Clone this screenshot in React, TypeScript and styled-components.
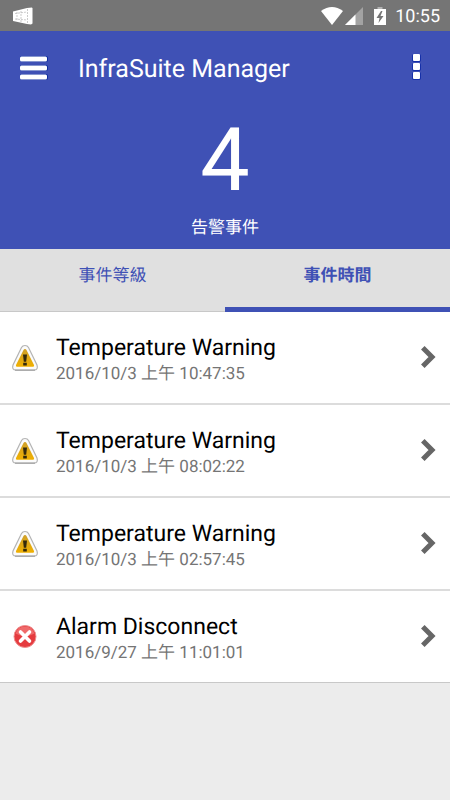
import React, { useState } from 'react';
import styled, { createGlobalStyle } from 'styled-components';

const PRIMARY = '#3f51b5';

const GlobalStyle = createGlobalStyle`
  *, *::before, *::after { box-sizing: border-box; }
  body {
    margin: 0;
    background: #ececec;
    font-family: Roboto, "Noto Sans CJK TC", sans-serif;
    text-rendering: geometricPrecision;
  }
  button { font: inherit; text-rendering: inherit; border: 0; padding: 0; margin: 0; background: none; cursor: pointer; }
  svg { display: block; flex: none; }
`;

const Screen = styled.div`
  min-height: 100vh;
  background: #ececec;
`;

const StatusBar = styled.div`
  display: flex;
  align-items: center;
  height: 31px;
  padding: 0 10px 0 12px;
  background: #757575;
  color: #fff;
`;

const StatusIcons = styled.div`
  display: flex;
  align-items: center;
  margin-left: auto;
`;

const Clock = styled.time`
  margin-left: 9px;
  padding-top: 2px;
  font-size: 18px;
  line-height: 30px;
`;

const Header = styled.header`
  height: 218px;
  background: ${PRIMARY};
  color: #fff;
`;

const Toolbar = styled.div`
  display: flex;
  align-items: center;
  height: 76px;
  padding: 0 28px 0 20px;
`;

const IconButton = styled.button`
  display: flex;
  color: #fff;
`;

const Title = styled.h1`
  flex: 1;
  margin: 0 0 0 30px;
  padding-top: 2px;
  font-size: 25px;
  font-weight: 400;
  line-height: 32px;
`;

const Summary = styled.div`
  display: flex;
  flex-direction: column;
  align-items: center;
`;

const Count = styled.div`
  font-size: 88px;
  line-height: 108px;
`;

const Caption = styled.div`
  font-size: 17px;
  line-height: 26px;
`;

const Tabs = styled.div`
  display: grid;
  grid-template-columns: 1fr 1fr;
  height: 63px;
  background: #e0e0e0;
`;

const Tab = styled.button<{ $active: boolean }>`
  border-bottom: ${({ $active }) => ($active ? `5px solid ${PRIMARY}` : '1px solid #c8c8c8')};
  padding-bottom: ${({ $active }) => ($active ? '10px' : '14px')};
  color: ${PRIMARY};
  font-size: 17px;
  font-weight: ${({ $active }) => ($active ? 700 : 400)};
`;

const List = styled.ul`
  margin: 0;
  padding: 0;
  list-style: none;
`;

const Row = styled.button`
  display: flex;
  align-items: center;
  width: 100%;
  height: 93px;
  padding: 0 14px 0 11px;
  border-bottom: 2px solid #dcdcdc;
  background: #fff;
  text-align: left;

  li:last-child > & {
    height: 92px;
    border-bottom: 1px solid #c8c8c8;
  }
`;

const RowText = styled.span`
  flex: 1;
  display: flex;
  flex-direction: column;
  margin-left: 17px;
  padding-top: 6px;
`;

const RowTitle = styled.span`
  color: #000;
  font-size: 23px;
  line-height: 27px;
`;

const RowDate = styled.span`
  color: #757575;
  font-size: 17px;
  line-height: 27px;
`;

const AppGlyph = () => (
  <svg width="22" height="18" viewBox="0 0 22 18" aria-hidden="true">
    <path d="M1 4.500 15 1 20 .5 20.500 1.500V16.500L19 17.500 15 17 1 14z" fill="#fff" />
    <path d="M5 5v9M9 4v11M15.500 2v14M3 6.500 15 5M3 12l12 1" stroke="#b5b5b5" strokeWidth=".7" strokeDasharray="2 1" fill="none" />
  </svg>
);

const WifiGlyph = () => (
  <svg width="22" height="18" viewBox="0 0 22 18" aria-hidden="true">
    <path d="M0 4Q11-4 22 4L11 18z" fill="#fff" />
  </svg>
);

const SignalSvg = styled.svg`
  margin-left: 2px;
`;

const SignalGlyph = () => (
  <SignalSvg width="18" height="18" viewBox="0 0 18 18" aria-hidden="true">
    <path d="M18 0V18H0z" fill="#a3a3a3" />
    <path d="M10.500 7.500V18H0z" fill="#fff" />
  </SignalSvg>
);

const BatterySvg = styled.svg`
  margin-left: 11px;
`;

const BatteryGlyph = () => (
  <BatterySvg width="12" height="18" viewBox="0 0 12 18" aria-hidden="true">
    <path d="M3.500 0h5v2H3.500z" fill="#b4b4b4" />
    <path d="M0 2h12v16H0z" fill="#fff" />
    <path d="M7 4 2.500 11H5.500L4.500 16 9.500 9H6.500L8.500 4z" fill="#757575" />
  </BatterySvg>
);

const MenuGlyph = () => (
  <svg width="28" height="26" viewBox="0 0 28 26" aria-hidden="true">
    <g fill="#0d2c9e">
      <rect x="0" y="0" width="28" height="6" rx="2" />
      <rect x="0" y="9" width="28" height="6" rx="2" />
      <rect x="0" y="18" width="28" height="6" rx="2" />
    </g>
    <g fill="#fff">
      <rect x="0" y="0.500" width="27" height="5" rx="1.500" />
      <rect x="0" y="9.500" width="27" height="5" rx="1.500" />
      <rect x="0" y="18.500" width="27" height="5" rx="1.500" />
    </g>
  </svg>
);

const MoreGlyph = () => (
  <svg width="10" height="30" viewBox="0 0 10 30" aria-hidden="true">
    <g fill="#1530a8">
      <rect x="0" y="0" width="9" height="8" rx="2" />
      <rect x="0" y="9" width="9" height="8" rx="2" />
      <rect x="0" y="18" width="9" height="8" rx="2" />
    </g>
    <g fill="#fff">
      <rect x="1" y="0" width="7" height="7" rx="1" />
      <rect x="1" y="9" width="7" height="7" rx="1" />
      <rect x="1" y="18" width="7" height="7" rx="1" />
    </g>
  </svg>
);

const WarningGlyph = () => (
  <svg width="28" height="28" viewBox="0 0 28 28" role="img" aria-label="Warning">
    <defs>
      <linearGradient id="amber" x1="0" y1="0" x2="0" y2="1">
        <stop offset="0" stopColor="#cfa02a" />
        <stop offset="1" stopColor="#f0b000" />
      </linearGradient>
    </defs>
    <path d="M14 1.500q2.500 0 3.500 2l8.500 17.500q1.500 5-3 5h-18q-4.500 0-3-5L10.500 3.500q1-2 3.500-2z" fill="#fbfbfb" stroke="#b4b4b4" strokeWidth="1.200" />
    <path d="M4 26.200h20" stroke="#999" strokeWidth="1" />
    <path d="M14 5q1 0 1.500 1l7.500 15q.7 1.700-1 1.700h-16q-1.700 0-1-1.700L12.500 6q.5-1 1.500-1z" fill="url(#amber)" />
    <path d="M12 10.500h4l-.8 7.200h-2.400zM12.200 18.700h3.600v2.700h-3.600z" fill="#33290c" />
  </svg>
);

const ErrorGlyph = () => (
  <svg width="28" height="28" viewBox="0 0 28 28" role="img" aria-label="Error">
    <circle cx="14" cy="13.500" r="11" fill="#e53b3f" stroke="#ef9292" strokeWidth="1" />
    <path d="M4.500 10.500a10 10 0 0 1 19 0q-9.500 5-19 0z" fill="#ef6a6a" />
    <path d="M9.500 9l9 9M18.500 9l-9 9" stroke="#fff" strokeWidth="3.600" strokeLinecap="round" />
  </svg>
);

const ChevronGlyph = () => (
  <svg width="16" height="26" viewBox="0 0 16 26" aria-hidden="true">
    <path d="M2.800 2.800 12 12 2.800 21.200" fill="none" stroke="#666" strokeWidth="5" />
  </svg>
);

type Level = 'warning' | 'error';

const EVENTS: { level: Level; title: string; date: string }[] = [
  { level: 'warning', title: 'Temperature Warning', date: '2016/10/3 上午 10:47:35' },
  { level: 'warning', title: 'Temperature Warning', date: '2016/10/3 上午 08:02:22' },
  { level: 'warning', title: 'Temperature Warning', date: '2016/10/3 上午 02:57:45' },
  { level: 'error', title: 'Alarm Disconnect', date: '2016/9/27 上午 11:01:01' },
];

const TABS = ['事件等級', '事件時間'];

export default function App() {
  const [active, setActive] = useState(1);

  return (
    <Screen lang="zh-Hant">
      <GlobalStyle />
      <StatusBar>
        <AppGlyph />
        <StatusIcons>
          <WifiGlyph />
          <SignalGlyph />
          <BatteryGlyph />
          <Clock>10:55</Clock>
        </StatusIcons>
      </StatusBar>
      <Header>
        <Toolbar>
          <IconButton aria-label="Menu"><MenuGlyph /></IconButton>
          <Title>InfraSuite Manager</Title>
          <IconButton aria-label="More options"><MoreGlyph /></IconButton>
        </Toolbar>
        <Summary>
          <Count>4</Count>
          <Caption>告警事件</Caption>
        </Summary>
      </Header>
      <Tabs role="tablist">
        {TABS.map((label, i) => (
          <Tab key={label} role="tab" aria-selected={i === active} $active={i === active} onClick={() => setActive(i)}>
            {label}
          </Tab>
        ))}
      </Tabs>
      <List>
        {EVENTS.map((event) => (
          <li key={event.date}>
            <Row>
              {event.level === 'warning' ? <WarningGlyph /> : <ErrorGlyph />}
              <RowText>
                <RowTitle>{event.title}</RowTitle>
                <RowDate>{event.date}</RowDate>
              </RowText>
              <ChevronGlyph />
            </Row>
          </li>
        ))}
      </List>
    </Screen>
  );
}
